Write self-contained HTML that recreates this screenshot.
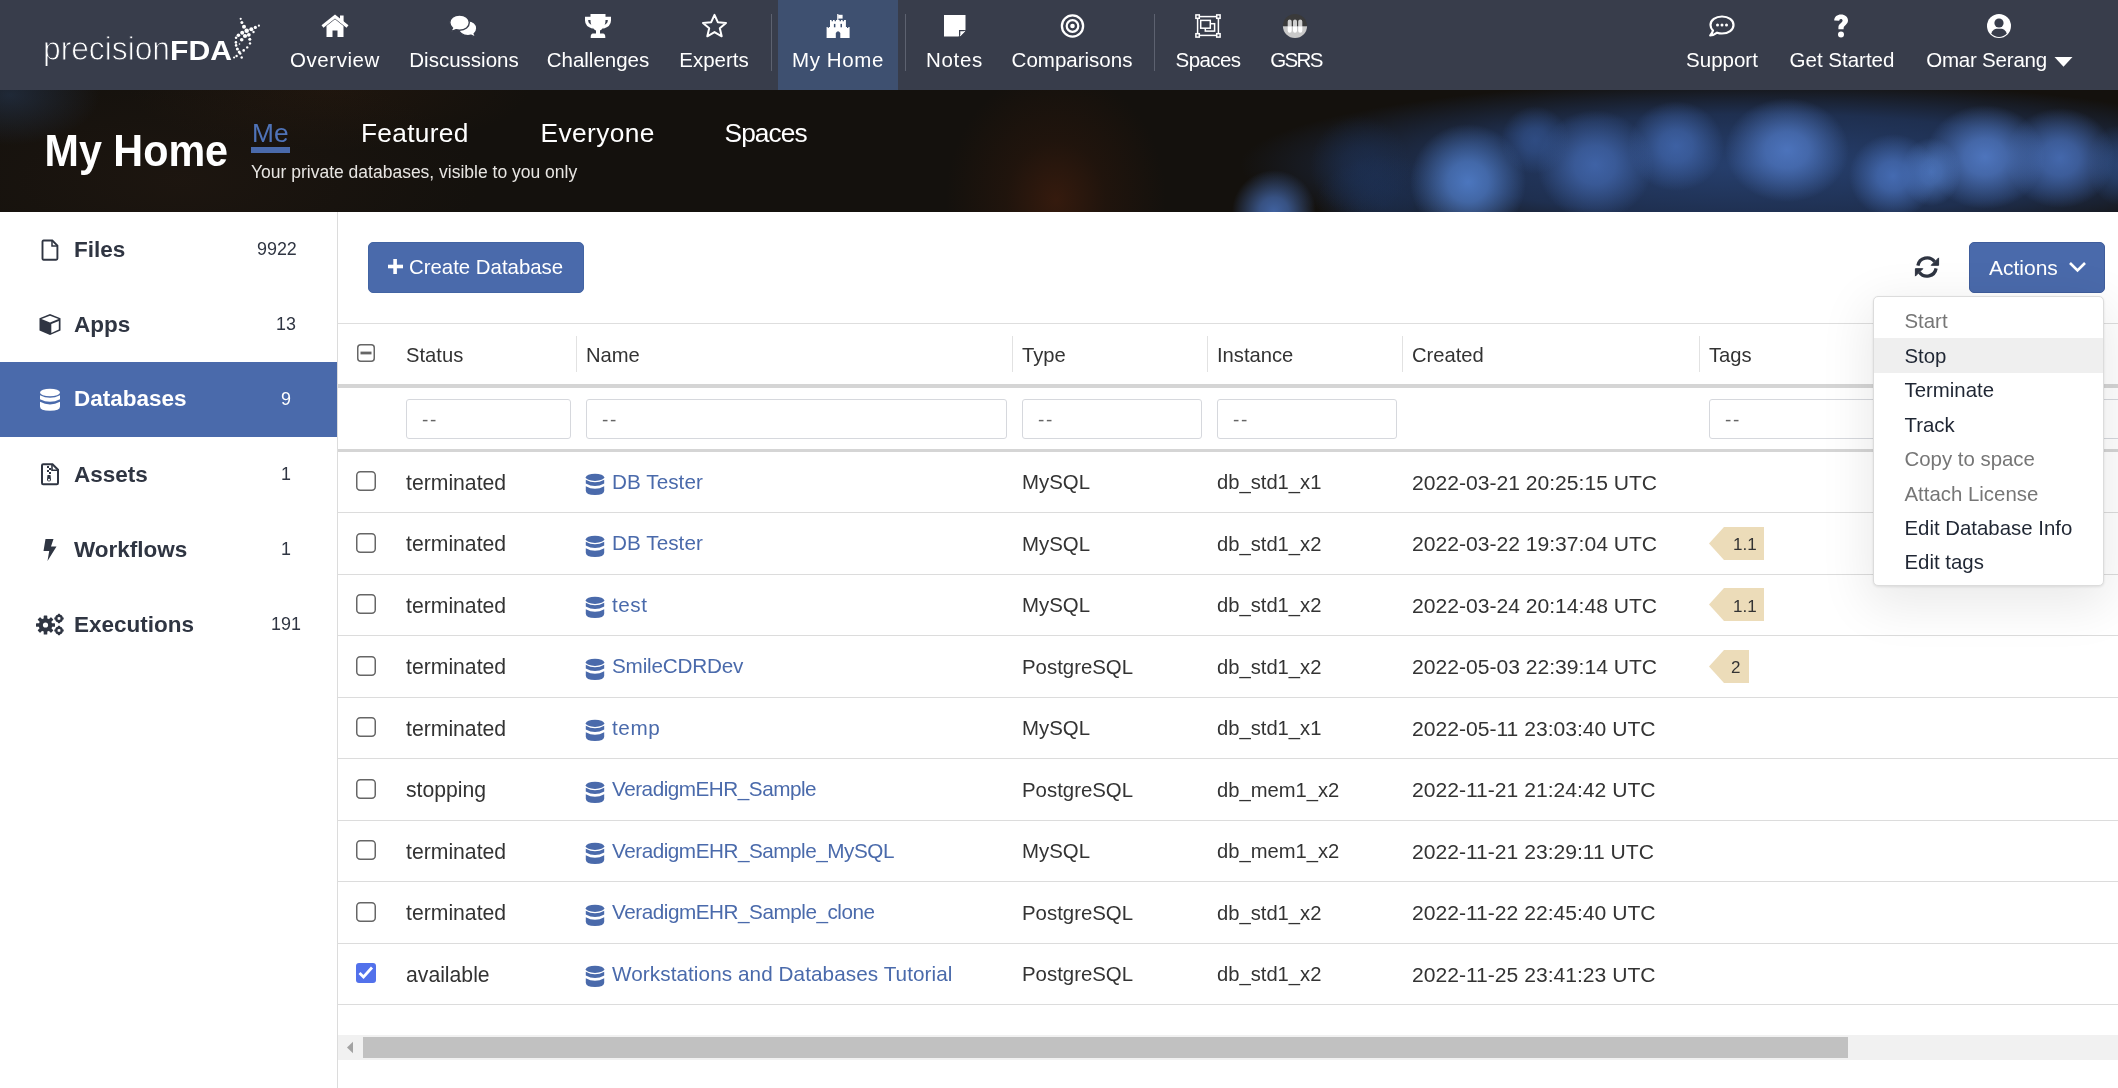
<!DOCTYPE html>
<html><head><meta charset="utf-8">
<style>
*{box-sizing:border-box}
html,body{margin:0;padding:0}
body{width:2118px;height:1088px;overflow:hidden;position:relative;will-change:transform;background:#fff;font-family:"Liberation Sans",sans-serif;color:#333}
.a{position:absolute}
.t{position:absolute;line-height:1;white-space:nowrap}
svg{position:absolute;display:block}
#nav{left:0;top:0;width:2118px;height:90px;background:#383d4b}
.ni{position:absolute;width:200px;text-align:center;color:#fff;font-size:20.5px;line-height:1;top:49.6px;white-space:nowrap}
.sep{position:absolute;top:14px;width:1px;height:57px;background:#5d6270}
#banner{left:0;top:90px;width:2118px;height:122px;overflow:hidden;background:radial-gradient(ellipse 58px 58px at 1468px 92px, rgba(78,122,196,0.95) 0, rgba(78,122,196,0.76) 35%, rgba(78,122,196,0) 100%),radial-gradient(ellipse 42px 42px at 1274px 122px, rgba(72,112,186,0.85) 0, rgba(72,112,186,0.68) 35%, rgba(72,112,186,0) 100%),radial-gradient(ellipse 50px 50px at 1360px 76px, rgba(30,55,100,0.45) 0, rgba(30,55,100,0.36) 35%, rgba(30,55,100,0) 100%),radial-gradient(ellipse 34px 34px at 1535px 50px, rgba(55,90,155,0.65) 0, rgba(55,90,155,0.52) 35%, rgba(55,90,155,0) 100%),radial-gradient(ellipse 58px 55px at 1595px 75px, rgba(68,106,178,0.85) 0, rgba(68,106,178,0.68) 35%, rgba(68,106,178,0) 100%),radial-gradient(ellipse 48px 45px at 1676px 56px, rgba(66,104,175,0.85) 0, rgba(66,104,175,0.68) 35%, rgba(66,104,175,0) 100%),radial-gradient(ellipse 62px 52px at 1787px 60px, rgba(78,118,192,0.95) 0, rgba(78,118,192,0.76) 35%, rgba(78,118,192,0) 100%),radial-gradient(ellipse 44px 42px at 1893px 86px, rgba(72,112,186,0.90) 0, rgba(72,112,186,0.72) 35%, rgba(72,112,186,0) 100%),radial-gradient(ellipse 30px 34px at 1931px 82px, rgba(82,125,200,0.80) 0, rgba(82,125,200,0.64) 35%, rgba(82,125,200,0) 100%),radial-gradient(ellipse 60px 52px at 1985px 67px, rgba(80,120,194,0.95) 0, rgba(80,120,194,0.76) 35%, rgba(80,120,194,0) 100%),radial-gradient(ellipse 55px 50px at 2060px 68px, rgba(72,110,182,0.90) 0, rgba(72,110,182,0.72) 35%, rgba(72,110,182,0) 100%),radial-gradient(ellipse 30px 40px at 2118px 75px, rgba(50,85,145,0.60) 0, rgba(50,85,145,0.48) 35%, rgba(50,85,145,0) 100%),radial-gradient(ellipse 70px 50px at 1385px 115px, rgba(30,55,100,0.55) 0, rgba(30,55,100,0.44) 35%, rgba(30,55,100,0) 100%),radial-gradient(ellipse 520px 85px at 1760px 75px, rgba(42,72,128,0.85) 0, rgba(35,60,108,0.7) 60%, rgba(20,35,60,0) 100%),radial-gradient(ellipse 110px 130px at 1056px 110px, rgba(80,34,14,0.55) 0, rgba(55,26,12,0.35) 45%, rgba(30,20,14,0) 100%),radial-gradient(ellipse 90px 50px at 10px 5px, rgba(40,60,90,0.55) 0, rgba(40,60,90,0) 100%),radial-gradient(ellipse 300px 120px at 180px 90px, rgba(45,30,20,0.35) 0, rgba(40,28,18,0) 100%),radial-gradient(ellipse 200px 60px at 330px 0px, rgba(50,30,15,0.35) 0, rgba(50,30,15,0) 100%),#14110d}
#side{left:0;top:212px;width:337px;height:876px;background:#fff}
#sideb{left:337px;top:212px;width:1px;height:876px;background:#dcdcdc}
.sl{position:absolute;left:74px;font-weight:bold;font-size:22.5px;line-height:1;color:#2f3542;white-space:nowrap}
.sc{position:absolute;width:60px;left:256px;text-align:center;font-size:17.9px;line-height:1;color:#2f3542}
</style></head>
<body>
<!-- NAV -->
<div id="nav" class="a">
  <div class="a" style="left:778px;top:0;width:120px;height:90px;background:#3e5070"></div>

  <!-- nav icons -->
  <svg style="left:321px;top:14px" width="28" height="24" viewBox="0 0 28 24">
    <path d="M1.5 12.5 L14 2.5 L26.5 12.5" fill="none" stroke="#fff" stroke-width="3.2" stroke-linejoin="miter"/>
    <rect x="19" y="1.5" width="3.6" height="7" fill="#fff"/>
    <path d="M5.5 12 L14 5.3 L22.5 12 V23 H16.5 V16.5 H11.5 V23 H5.5 Z" fill="#fff"/>
  </svg>
  <svg style="left:449px;top:14px" width="29" height="24" viewBox="0 0 29 24">
    <path d="M19 6.8 C24.3 6.8 27.8 10.3 27.8 14.3 C27.8 16.5 26.8 18.4 25.2 19.8 C25.6 21 26.5 22.2 27.6 23 C25.2 23 23.3 22.1 21.9 21.2 C21 21.5 20 21.7 19 21.7 C13.7 21.7 9.5 18.4 9.5 14.3 C9.5 10.3 13.7 6.8 19 6.8 Z" fill="#fff" stroke="#383d4b" stroke-width="1.4"/>
    <path d="M10.5 1 C16.2 1 20.3 4.4 20.3 8.6 C20.3 12.8 16.2 16.2 10.5 16.2 C9.3 16.2 8.2 16 7.2 15.7 C5.8 16.5 3.5 17.3 1 17.2 C2.1 16.4 3 15.3 3.5 14 C1.8 12.6 0.8 10.7 0.8 8.6 C0.8 4.4 4.9 1 10.5 1 Z" fill="#fff" stroke="#383d4b" stroke-width="1.4"/>
  </svg>
  <svg style="left:584px;top:13px" width="28" height="26" viewBox="0 0 28 26">
    <path d="M6.5 1 H21.5 V7 C21.5 13 18.5 16.5 16 17.5 V20.5 H19 Q21.3 20.5 21.3 24 V25 H6.7 V24 Q6.7 20.5 9 20.5 H12 V17.5 C9.5 16.5 6.5 13 6.5 7 Z" fill="#fff"/>
    <path d="M7 5.4 H2.6 V7.6 C2.6 11 5.5 13.2 9 14.2" fill="none" stroke="#fff" stroke-width="3.2"/>
    <path d="M21 5.4 H25.4 V7.6 C25.4 11 22.5 13.2 19 14.2" fill="none" stroke="#fff" stroke-width="3.2"/>
  </svg>
  <svg style="left:701px;top:13px" width="27" height="26" viewBox="0 0 27 26">
    <path d="M13.5 1.8 L16.8 9.2 L25 9.9 L18.8 15.3 L20.7 23.3 L13.5 19.1 L6.3 23.3 L8.2 15.3 L2 9.9 L10.2 9.2 Z" fill="none" stroke="#fff" stroke-width="2" stroke-linejoin="round"/>
  </svg>
  <svg style="left:826px;top:13px" width="25" height="26" viewBox="0 0 25 26">
    <rect x="11.2" y="1" width="1.2" height="6.5" fill="#fff"/>
    <path d="M12.2 1.8 H16.6 V5.6 H12.2 Z" fill="#fff"/>
    <path d="M0.6 13.9 H1.8 V15 H2.8 V13.9 H4 V7.1 H5.6 V8.3 H7 V7.1 H8.6 V8.3 H10 V7.1 H13.6 V8.3 H15 V7.1 H16.6 V8.3 H18 V7.1 H19.9 V13.9 H21 V15 H22.3 V13.9 H23.6 V25 H14.3 V20 Q12.05 16.5 9.8 20 V25 H0.6 Z" fill="#fff"/>
    <rect x="7.9" y="10.9" width="1.5" height="3.4" fill="#3e5070"/>
    <rect x="14.5" y="10.9" width="1.5" height="3.4" fill="#3e5070"/>
  </svg>
  <svg style="left:943px;top:14px" width="24" height="24" viewBox="0 0 24 24">
    <path d="M1 1 H22.5 V15.5 L15.5 22.5 H1 Z" fill="#fff"/>
    <path d="M16.8 22.5 V16.8 H22.5 Z" fill="#fff"/>
    <path d="M16 16 H22.5 L16 22.5 Z" fill="#383d4b"/>
    <path d="M17.3 17.3 H22.2 L17.3 22.2 Z" fill="#fff"/>
  </svg>
  <svg style="left:1060px;top:13px" width="25" height="26" viewBox="0 0 25 26">
    <circle cx="12.5" cy="13" r="10.6" fill="none" stroke="#fff" stroke-width="2.3"/>
    <circle cx="12.5" cy="13" r="5.8" fill="none" stroke="#fff" stroke-width="2.2"/>
    <circle cx="12.5" cy="13" r="2.3" fill="#fff"/>
  </svg>
  <svg style="left:1195px;top:14px" width="26" height="24" viewBox="0 0 26 24">
    <rect x="2.6" y="2.6" width="20.8" height="18.8" fill="none" stroke="#fff" stroke-width="1.5"/>
    <rect x="0.9" y="0.9" width="3.4" height="3.4" fill="#383d4b" stroke="#fff" stroke-width="1.5"/>
    <rect x="21.7" y="0.9" width="3.4" height="3.4" fill="#383d4b" stroke="#fff" stroke-width="1.5"/>
    <rect x="0.9" y="19.7" width="3.4" height="3.4" fill="#383d4b" stroke="#fff" stroke-width="1.5"/>
    <rect x="21.7" y="19.7" width="3.4" height="3.4" fill="#383d4b" stroke="#fff" stroke-width="1.5"/>
    <rect x="10.3" y="9.7" width="9.3" height="7.4" fill="none" stroke="#fff" stroke-width="1.5"/>
    <rect x="5.7" y="6.4" width="9.6" height="7.8" fill="#383d4b" stroke="#fff" stroke-width="1.5"/>
  </svg>
  <svg style="left:1282px;top:13px" width="26" height="26" viewBox="0 0 26 26">
    <defs><clipPath id="gc"><circle cx="13" cy="13" r="12.1"/></clipPath></defs>
    <g clip-path="url(#gc)">
      <rect x="0" y="0" width="26" height="13.3" fill="#3a3a3a"/>
      <rect x="0" y="13.3" width="26" height="13" fill="#c9c9c9"/>
      <path d="M5.7 13.3 V8.5 A2 2 0 0 1 9.7 8.5 V13.3 Z M11 13.3 V8.5 A2 2 0 0 1 15 8.5 V13.3 Z M16.2 13.3 V8.5 A2 2 0 0 1 20.3 8.5 V13.3 Z" fill="#cfcfcf"/>
      <path d="M5.7 13.3 H9.7 V17.8 A2 2 0 0 1 5.7 17.8 Z M11 13.3 H15 V17.8 A2 2 0 0 1 11 17.8 Z M16.2 13.3 H20.3 V17.8 A2 2 0 0 1 16.2 17.8 Z" fill="#fff"/>
    </g>
  </svg>
  <svg style="left:1709px;top:15px" width="26" height="22" viewBox="0 0 26 22">
    <path d="M13 1.5 C19.5 1.5 24.5 5.3 24.5 10 C24.5 14.7 19.5 18.5 13 18.5 C11.2 18.5 9.6 18.2 8.1 17.7 C6 19.3 3.5 20.5 1.2 20.5 C2.6 19 3.6 17.3 4 15.6 C2.4 14.1 1.5 12.1 1.5 10 C1.5 5.3 6.5 1.5 13 1.5 Z" fill="none" stroke="#fff" stroke-width="2.2" stroke-linejoin="round"/>
    <circle cx="8.5" cy="10" r="1.5" fill="#fff"/><circle cx="13" cy="10" r="1.5" fill="#fff"/><circle cx="17.5" cy="10" r="1.5" fill="#fff"/>
  </svg>
  <svg style="left:1831px;top:13px" width="20" height="26" viewBox="0 0 20 26">
    <path d="M3.2 7.5 C3.2 3.8 6.2 1.5 10 1.5 C14 1.5 17 4 17 7.5 C17 11.5 13 12 12.6 15.2 V16.2 H7.4 V14.8 C7.4 10.5 11.6 10 11.6 7.6 C11.6 6.5 10.9 5.9 9.9 5.9 C8.8 5.9 8.3 6.6 8.3 7.8 Z" fill="#fff"/>
    <circle cx="10" cy="21.5" r="3" fill="#fff"/>
  </svg>
  <svg style="left:1986px;top:13px" width="26" height="26" viewBox="0 0 26 26">
    <circle cx="13" cy="13" r="12" fill="#fff"/>
    <circle cx="13" cy="10" r="4.6" fill="#383d4b"/>
    <path d="M5.2 20.5 C6.5 17 9 15.8 10.5 15.8 H15.5 C17 15.8 19.5 17 20.8 20.5 C18.8 22.6 16 24 13 24 C10 24 7.2 22.6 5.2 20.5 Z" fill="#383d4b"/>
  </svg>
  <svg style="left:2054px;top:56px" width="19" height="12" viewBox="0 0 19 12">
    <path d="M0.5 1 H18.5 L9.5 10.8 Z" fill="#fff"/>
  </svg>
  <!-- logo -->
  <svg style="left:40px;top:14px" width="225" height="52" viewBox="0 0 225 52">
    <text x="3" y="46" fill="#fff" stroke="#383d4b" stroke-width="0.9" font-family="Liberation Sans" font-size="33" textLength="127" lengthAdjust="spacingAndGlyphs">precision</text>
    <text x="130" y="46" fill="#fff" font-family="Liberation Sans" font-size="28.5" font-weight="bold" textLength="62" lengthAdjust="spacingAndGlyphs">FDA</text>
    <g fill="#fff"><circle cx="200.7" cy="4.8" r="1.1"/><circle cx="201.9" cy="8.4" r="1.5"/><circle cx="204.0" cy="12.7" r="2.0"/><circle cx="206.7" cy="16.7" r="2.3"/><circle cx="205.0" cy="22.0" r="2.1"/><circle cx="201.7" cy="25.8" r="1.8"/><circle cx="195.9" cy="28.4" r="1.3"/><circle cx="196.1" cy="31.4" r="1.3"/><circle cx="197.4" cy="34.9" r="1.5"/><circle cx="199.2" cy="38.0" r="1.5"/><circle cx="201.7" cy="43.5" r="1.2"/><circle cx="218.9" cy="11.7" r="1.1"/><circle cx="215.3" cy="13.4" r="1.6"/><circle cx="211.3" cy="15.2" r="2.0"/><circle cx="208.8" cy="20.8" r="1.9"/><circle cx="202.2" cy="18.8" r="2.0"/><circle cx="198.4" cy="21.3" r="1.8"/><circle cx="196.1" cy="23.8" r="1.3"/><circle cx="209.8" cy="25.3" r="1.5"/><circle cx="210.0" cy="29.4" r="1.2"/><circle cx="207.2" cy="33.4" r="1.2"/><circle cx="203.7" cy="36.4" r="1.3"/><circle cx="200.2" cy="39.5" r="1.3"/><circle cx="196.6" cy="42.0" r="1.2"/><circle cx="194.1" cy="43.5" r="1.1"/><circle cx="213.5" cy="18.0" r="1.2"/><circle cx="199.5" cy="30.0" r="0.8"/></g>
  </svg>
  <div class="ni" style="left:235px;letter-spacing:0.55px">Overview</div>
  <div class="ni" style="left:364px">Discussions</div>
  <div class="ni" style="left:498px">Challenges</div>
  <div class="ni" style="left:614px">Experts</div>
  <div class="sep" style="left:771px"></div>
  <div class="ni" style="left:738px;letter-spacing:0.6px">My Home</div>
  <div class="sep" style="left:905px"></div>
  <div class="ni" style="left:854.5px;letter-spacing:0.7px">Notes</div>
  <div class="ni" style="left:972px">Comparisons</div>
  <div class="sep" style="left:1154px"></div>
  <div class="ni" style="left:1108px;letter-spacing:-0.6px">Spaces</div>
  <div class="ni" style="left:1196px;letter-spacing:-1.6px">GSRS</div>
  <div class="ni" style="left:1622px">Support</div>
  <div class="ni" style="left:1742px">Get Started</div>
  <div class="ni" style="width:200px;text-align:right;left:1847px;letter-spacing:-0.2px">Omar Serang</div>
</div>

<!-- BANNER -->
<div id="banner" class="a"></div>
<div class="t" style="left:44.5px;top:132px;font-size:41.3px;font-weight:bold;color:#fff;transform:scaleY(1.08);transform-origin:0 35px">My Home</div>
<div class="t" style="left:252px;top:119.7px;font-size:26.3px;color:#4f73b8">Me</div>
<div class="a" style="left:251px;top:147px;width:39px;height:6px;background:#4a6aab"></div>
<div class="t" style="left:361px;top:119.7px;font-size:26.3px;color:#fff;letter-spacing:0.3px">Featured</div>
<div class="t" style="left:540.5px;top:119.7px;font-size:26.3px;color:#fff;letter-spacing:0.4px">Everyone</div>
<div class="t" style="left:724.5px;top:119.7px;font-size:26.3px;color:#fff;letter-spacing:-0.9px">Spaces</div>
<div class="t" style="left:251px;top:163.8px;font-size:17.5px;color:#e8e6e3">Your private databases, visible to you only</div>

<!-- SIDEBAR -->
<div id="side" class="a"></div>
<div id="sideb" class="a"></div>
<div class="a" style="left:0;top:362px;width:337px;height:75px;background:#4a6aab"></div>
<div class="sl" style="top:238.5px">Files</div>
<div class="sl" style="top:313.6px">Apps</div>
<div class="sl" style="top:388.4px;color:#fff">Databases</div>
<div class="sl" style="top:463.5px">Assets</div>
<div class="sl" style="top:538.5px">Workflows</div>
<div class="sl" style="top:613.5px">Executions</div>
<div class="t" style="left:257px;top:240.9px;font-size:17.9px;color:#2f3542">9922</div>
<div class="sc" style="top:315.9px">13</div>
<div class="sc" style="top:390.9px;color:#fff">9</div>
<div class="sc" style="top:465.9px">1</div>
<div class="sc" style="top:540.9px">1</div>
<div class="sc" style="top:615.9px">191</div>


<!-- sidebar icons -->
<svg style="left:41px;top:239px" width="19" height="23" viewBox="0 0 19 23">
  <path d="M2.6 1.5 H11.3 L16.4 6.6 V19.5 Q16.4 20.7 15.2 20.7 H2.6 Q1.5 20.7 1.5 19.5 V2.7 Q1.5 1.5 2.6 1.5 Z" fill="none" stroke="#2f3542" stroke-width="1.9"/>
  <path d="M11 1.7 V7 H16.2" fill="none" stroke="#2f3542" stroke-width="1.5"/>
</svg>
<svg style="left:38px;top:313px" width="24" height="23" viewBox="0 0 24 23">
  <path d="M12 1 L22.5 5.2 V17.5 L12 22 L1.5 17.5 V5.2 Z" fill="#2f3542"/>
  <path d="M3.4 6.1 L12 9.6 L20.6 6.1 L12 2.7 Z" fill="#fff"/>
  <path d="M13.3 11 L20.8 7.9 V16.6 L13.3 19.9 Z" fill="#fff"/>
</svg>
<svg style="left:39px;top:388px" width="22" height="24" viewBox="0 0 22 24">
  <ellipse cx="11" cy="4.5" rx="10" ry="3.8" fill="#fff"/>
  <path d="M1 7.2 Q11 12.5 21 7.2 V11.2 Q11 16.5 1 11.2 Z" fill="#fff"/>
  <path d="M1 13.8 Q11 19 21 13.8 V18.5 Q21 22.8 11 22.8 Q1 22.8 1 18.5 Z" fill="#fff"/>
</svg>
<svg style="left:41px;top:463px" width="19" height="23" viewBox="0 0 19 23">
  <path d="M2.2 1.2 H11.5 L17 6.7 V20 Q17 21.3 15.7 21.3 H2.2 Q1 21.3 1 20 V2.5 Q1 1.2 2.2 1.2 Z" fill="none" stroke="#2f3542" stroke-width="2"/>
  <path d="M11 1.5 V7.2 H16.8" fill="none" stroke="#2f3542" stroke-width="1.6"/>
  <path d="M6 3 H8 V5 H6 Z M8 5 H10 V7 H8 Z M6 7 H8 V9 H6 Z M8 9 H10 V11 H8 Z" fill="#2f3542"/>
  <path d="M6.5 12 H9.5 L10 16.5 A2 2 0 1 1 6 16.5 Z" fill="#2f3542"/>
  <circle cx="8" cy="16.7" r="1" fill="#fff"/>
</svg>
<svg style="left:41px;top:538px" width="18" height="24" viewBox="0 0 18 24">
  <path d="M4.5 1 H12.5 L10 8.5 H15.5 L6.5 23 L8.2 13 H2.5 Z" fill="#2f3542"/>
</svg>
<svg style="left:35px;top:613px" width="30" height="23" viewBox="0 0 30 23">
  <g fill="#2f3542">
    <circle cx="10.5" cy="12" r="6.8"/>
    <rect x="8.7" y="2.5" width="3.6" height="19" rx="0.6"/>
    <rect x="1" y="10.2" width="19" height="3.6" rx="0.6"/>
    <rect x="8.7" y="2.5" width="3.6" height="19" rx="0.6" transform="rotate(45 10.5 12)"/>
    <rect x="8.7" y="2.5" width="3.6" height="19" rx="0.6" transform="rotate(-45 10.5 12)"/>
  </g>
  <circle cx="10.5" cy="12" r="2.6" fill="#fff"/>
  <g fill="none" stroke="#2f3542" stroke-width="2.2">
    <circle cx="24" cy="5.5" r="2.8"/>
    <circle cx="24" cy="17.5" r="2.8"/>
  </g>
  <g fill="#2f3542">
    <rect x="23" y="0.8" width="2" height="9.4"/><rect x="19.3" y="4.5" width="9.4" height="2"/>
    <rect x="23" y="12.8" width="2" height="9.4"/><rect x="19.3" y="16.5" width="9.4" height="2"/>
  </g>
  <circle cx="24" cy="5.5" r="1.4" fill="#fff"/><circle cx="24" cy="17.5" r="1.4" fill="#fff"/>
</svg>

<!-- CONTENT -->

<!-- toolbar -->
<div class="a" style="left:368px;top:242px;width:216px;height:51px;background:#4a6aab;border-radius:5px;border:1px solid #4264a3"></div>
<svg style="left:387px;top:258px" width="17" height="17" viewBox="0 0 17 17"><rect x="6.3" y="1" width="3.6" height="15" fill="#fff"/><rect x="1" y="6.7" width="15" height="3.6" fill="#fff"/></svg>
<div class="t" style="left:409px;top:257.4px;font-size:20.4px;color:#fff">Create Database</div>
<svg style="left:1914px;top:254px" width="26" height="26" viewBox="0 0 26 26">
  <path d="M3.9 11.6 A9.3 9.3 0 0 1 20.6 7.7" fill="none" stroke="#2f3542" stroke-width="3.3"/>
  <path d="M17.2 11.3 L24.6 11.3 L24.6 3.9 Z" fill="#2f3542" stroke="#2f3542" stroke-width="1" stroke-linejoin="round"/>
  <path d="M22.1 14.4 A9.3 9.3 0 0 1 5.4 18.3" fill="none" stroke="#2f3542" stroke-width="3.3"/>
  <path d="M8.8 14.7 L1.4 14.7 L1.4 22.1 Z" fill="#2f3542" stroke="#2f3542" stroke-width="1" stroke-linejoin="round"/>
</svg>
<div class="a" style="left:1969px;top:242px;width:136px;height:51px;background:#4a6aab;border-radius:5px;border:1px solid #3f5d9c"></div>
<div class="t" style="left:1989px;top:257.2px;font-size:21px;color:#fff">Actions</div>
<svg style="left:2068px;top:260px" width="19" height="14" viewBox="0 0 19 14"><path d="M2 3 L9.5 10.5 L17 3" fill="none" stroke="#fff" stroke-width="2.6"/></svg>

<!-- table -->
<div class="a" style="left:338px;top:323px;width:1780px;height:1px;background:#dedede"></div>
<div class="a" style="left:338px;top:384px;width:1780px;height:4px;background:#d5d5d5"></div>
<div class="a" style="left:338px;top:449px;width:1780px;height:3px;background:#d5d5d5"></div>
<div class="a" style="left:576px;top:336px;width:1px;height:36px;background:#e2e2e2"></div>
<div class="a" style="left:1012px;top:336px;width:1px;height:36px;background:#e2e2e2"></div>
<div class="a" style="left:1207px;top:336px;width:1px;height:36px;background:#e2e2e2"></div>
<div class="a" style="left:1402px;top:336px;width:1px;height:36px;background:#e2e2e2"></div>
<div class="a" style="left:1699px;top:336px;width:1px;height:36px;background:#e2e2e2"></div>
<svg style="left:356px;top:343px" width="20" height="20" viewBox="0 0 20 20"><rect x="1.75" y="1.75" width="16.5" height="16.5" rx="3" fill="#fff" stroke="#666" stroke-width="1.5"/><rect x="4.5" y="8.6" width="11" height="2.8" fill="#666"/></svg>

<div class="t" style="left:406px;top:344.5px;font-size:20.2px;color:#333">Status</div>
<div class="t" style="left:586px;top:344.5px;font-size:20.2px;color:#333">Name</div>
<div class="t" style="left:1022px;top:344.5px;font-size:20.2px;color:#333">Type</div>
<div class="t" style="left:1217px;top:344.5px;font-size:20.2px;color:#333">Instance</div>
<div class="t" style="left:1412px;top:344.5px;font-size:20.2px;color:#333">Created</div>
<div class="t" style="left:1709px;top:344.5px;font-size:20.2px;color:#333">Tags</div>
<div class="a" style="left:406px;top:399px;width:165px;height:40px;border:1px solid #d6d8dd;border-radius:3px;background:#fff"></div>
<div class="t" style="left:422px;top:410px;font-size:19px;color:#666;letter-spacing:1.6px">--</div>
<div class="a" style="left:586px;top:399px;width:421px;height:40px;border:1px solid #d6d8dd;border-radius:3px;background:#fff"></div>
<div class="t" style="left:602px;top:410px;font-size:19px;color:#666;letter-spacing:1.6px">--</div>
<div class="a" style="left:1022px;top:399px;width:180px;height:40px;border:1px solid #d6d8dd;border-radius:3px;background:#fff"></div>
<div class="t" style="left:1038px;top:410px;font-size:19px;color:#666;letter-spacing:1.6px">--</div>
<div class="a" style="left:1217px;top:399px;width:180px;height:40px;border:1px solid #d6d8dd;border-radius:3px;background:#fff"></div>
<div class="t" style="left:1233px;top:410px;font-size:19px;color:#666;letter-spacing:1.6px">--</div>
<div class="a" style="left:1709px;top:399px;width:500px;height:40px;border:1px solid #d6d8dd;border-radius:3px;background:#fff"></div>
<div class="t" style="left:1725px;top:410px;font-size:19px;color:#666;letter-spacing:1.6px">--</div>
<div class="a" style="left:338px;top:512.0px;width:1780px;height:1px;background:#dcdcdc"></div>
<svg style="left:355px;top:470.0px" width="22" height="22" viewBox="0 0 22 22"><rect x="1.75" y="1.75" width="18.5" height="18.5" rx="3.5" fill="#fff" stroke="#666" stroke-width="1.5"/></svg>
<div class="t" style="left:406px;top:471.5px;font-size:21.2px;color:#333">terminated</div>
<svg style="left:585px;top:473.0px" width="20" height="23" viewBox="0 0 20 23"><ellipse cx="10" cy="4.3" rx="9.2" ry="3.6" fill="#4a6aab"/><path d="M0.8 6.8 Q10 11.8 19.2 6.8 V10.6 Q10 15.6 0.8 10.6 Z" fill="#4a6aab"/><path d="M0.8 13.2 Q10 18.2 19.2 13.2 V17.8 Q19.2 22 10 22 Q0.8 22 0.8 17.8 Z" fill="#4a6aab"/></svg>
<div class="t" style="left:612px;top:471.9px;font-size:20.7px;color:#4a6aab;letter-spacing:0.05px">DB Tester</div>
<div class="t" style="left:1022px;top:472.2px;font-size:20.4px;color:#333">MySQL</div>
<div class="t" style="left:1217px;top:472.3px;font-size:20.2px;color:#333">db_std1_x1</div>
<div class="t" style="left:1412px;top:471.6px;font-size:21.1px;color:#333">2022-03-21 20:25:15 UTC</div>
<div class="a" style="left:338px;top:573.5px;width:1780px;height:1px;background:#dcdcdc"></div>
<svg style="left:355px;top:531.5px" width="22" height="22" viewBox="0 0 22 22"><rect x="1.75" y="1.75" width="18.5" height="18.5" rx="3.5" fill="#fff" stroke="#666" stroke-width="1.5"/></svg>
<div class="t" style="left:406px;top:533.0px;font-size:21.2px;color:#333">terminated</div>
<svg style="left:585px;top:534.5px" width="20" height="23" viewBox="0 0 20 23"><ellipse cx="10" cy="4.3" rx="9.2" ry="3.6" fill="#4a6aab"/><path d="M0.8 6.8 Q10 11.8 19.2 6.8 V10.6 Q10 15.6 0.8 10.6 Z" fill="#4a6aab"/><path d="M0.8 13.2 Q10 18.2 19.2 13.2 V17.8 Q19.2 22 10 22 Q0.8 22 0.8 17.8 Z" fill="#4a6aab"/></svg>
<div class="t" style="left:612px;top:533.4px;font-size:20.7px;color:#4a6aab;letter-spacing:0.05px">DB Tester</div>
<div class="t" style="left:1022px;top:533.7px;font-size:20.4px;color:#333">MySQL</div>
<div class="t" style="left:1217px;top:533.8px;font-size:20.2px;color:#333">db_std1_x2</div>
<div class="t" style="left:1412px;top:533.1px;font-size:21.1px;color:#333">2022-03-22 19:37:04 UTC</div>
<svg style="left:1709px;top:526.5px" width="55" height="33" viewBox="0 0 55 33"><path d="M0 16.5 L15 0 H55 V33 H15 Z" fill="#ecdcb9"/></svg>
<div class="t" style="left:1733px;top:536.0px;font-size:17px;color:#333">1.1</div>
<div class="a" style="left:338px;top:635.0px;width:1780px;height:1px;background:#dcdcdc"></div>
<svg style="left:355px;top:593.0px" width="22" height="22" viewBox="0 0 22 22"><rect x="1.75" y="1.75" width="18.5" height="18.5" rx="3.5" fill="#fff" stroke="#666" stroke-width="1.5"/></svg>
<div class="t" style="left:406px;top:594.5px;font-size:21.2px;color:#333">terminated</div>
<svg style="left:585px;top:596.0px" width="20" height="23" viewBox="0 0 20 23"><ellipse cx="10" cy="4.3" rx="9.2" ry="3.6" fill="#4a6aab"/><path d="M0.8 6.8 Q10 11.8 19.2 6.8 V10.6 Q10 15.6 0.8 10.6 Z" fill="#4a6aab"/><path d="M0.8 13.2 Q10 18.2 19.2 13.2 V17.8 Q19.2 22 10 22 Q0.8 22 0.8 17.8 Z" fill="#4a6aab"/></svg>
<div class="t" style="left:612px;top:594.9px;font-size:20.7px;color:#4a6aab;letter-spacing:0.52px">test</div>
<div class="t" style="left:1022px;top:595.2px;font-size:20.4px;color:#333">MySQL</div>
<div class="t" style="left:1217px;top:595.3px;font-size:20.2px;color:#333">db_std1_x2</div>
<div class="t" style="left:1412px;top:594.6px;font-size:21.1px;color:#333">2022-03-24 20:14:48 UTC</div>
<svg style="left:1709px;top:588.0px" width="55" height="33" viewBox="0 0 55 33"><path d="M0 16.5 L15 0 H55 V33 H15 Z" fill="#ecdcb9"/></svg>
<div class="t" style="left:1733px;top:597.5px;font-size:17px;color:#333">1.1</div>
<div class="a" style="left:338px;top:696.5px;width:1780px;height:1px;background:#dcdcdc"></div>
<svg style="left:355px;top:654.5px" width="22" height="22" viewBox="0 0 22 22"><rect x="1.75" y="1.75" width="18.5" height="18.5" rx="3.5" fill="#fff" stroke="#666" stroke-width="1.5"/></svg>
<div class="t" style="left:406px;top:656.0px;font-size:21.2px;color:#333">terminated</div>
<svg style="left:585px;top:657.5px" width="20" height="23" viewBox="0 0 20 23"><ellipse cx="10" cy="4.3" rx="9.2" ry="3.6" fill="#4a6aab"/><path d="M0.8 6.8 Q10 11.8 19.2 6.8 V10.6 Q10 15.6 0.8 10.6 Z" fill="#4a6aab"/><path d="M0.8 13.2 Q10 18.2 19.2 13.2 V17.8 Q19.2 22 10 22 Q0.8 22 0.8 17.8 Z" fill="#4a6aab"/></svg>
<div class="t" style="left:612px;top:656.4px;font-size:20.7px;color:#4a6aab;letter-spacing:-0.20px">SmileCDRDev</div>
<div class="t" style="left:1022px;top:656.7px;font-size:20.4px;color:#333">PostgreSQL</div>
<div class="t" style="left:1217px;top:656.8px;font-size:20.2px;color:#333">db_std1_x2</div>
<div class="t" style="left:1412px;top:656.1px;font-size:21.1px;color:#333">2022-05-03 22:39:14 UTC</div>
<svg style="left:1709px;top:649.5px" width="40" height="33" viewBox="0 0 40 33"><path d="M0 16.5 L15 0 H40 V33 H15 Z" fill="#ecdcb9"/></svg>
<div class="t" style="left:1731px;top:659.0px;font-size:17px;color:#333">2</div>
<div class="a" style="left:338px;top:758.0px;width:1780px;height:1px;background:#dcdcdc"></div>
<svg style="left:355px;top:716.0px" width="22" height="22" viewBox="0 0 22 22"><rect x="1.75" y="1.75" width="18.5" height="18.5" rx="3.5" fill="#fff" stroke="#666" stroke-width="1.5"/></svg>
<div class="t" style="left:406px;top:717.5px;font-size:21.2px;color:#333">terminated</div>
<svg style="left:585px;top:719.0px" width="20" height="23" viewBox="0 0 20 23"><ellipse cx="10" cy="4.3" rx="9.2" ry="3.6" fill="#4a6aab"/><path d="M0.8 6.8 Q10 11.8 19.2 6.8 V10.6 Q10 15.6 0.8 10.6 Z" fill="#4a6aab"/><path d="M0.8 13.2 Q10 18.2 19.2 13.2 V17.8 Q19.2 22 10 22 Q0.8 22 0.8 17.8 Z" fill="#4a6aab"/></svg>
<div class="t" style="left:612px;top:717.9px;font-size:20.7px;color:#4a6aab;letter-spacing:0.61px">temp</div>
<div class="t" style="left:1022px;top:718.2px;font-size:20.4px;color:#333">MySQL</div>
<div class="t" style="left:1217px;top:718.3px;font-size:20.2px;color:#333">db_std1_x1</div>
<div class="t" style="left:1412px;top:717.6px;font-size:21.1px;color:#333">2022-05-11 23:03:40 UTC</div>
<div class="a" style="left:338px;top:819.5px;width:1780px;height:1px;background:#dcdcdc"></div>
<svg style="left:355px;top:777.5px" width="22" height="22" viewBox="0 0 22 22"><rect x="1.75" y="1.75" width="18.5" height="18.5" rx="3.5" fill="#fff" stroke="#666" stroke-width="1.5"/></svg>
<div class="t" style="left:406px;top:779.0px;font-size:21.2px;color:#333">stopping</div>
<svg style="left:585px;top:780.5px" width="20" height="23" viewBox="0 0 20 23"><ellipse cx="10" cy="4.3" rx="9.2" ry="3.6" fill="#4a6aab"/><path d="M0.8 6.8 Q10 11.8 19.2 6.8 V10.6 Q10 15.6 0.8 10.6 Z" fill="#4a6aab"/><path d="M0.8 13.2 Q10 18.2 19.2 13.2 V17.8 Q19.2 22 10 22 Q0.8 22 0.8 17.8 Z" fill="#4a6aab"/></svg>
<div class="t" style="left:612px;top:779.4px;font-size:20.7px;color:#4a6aab;letter-spacing:-0.48px">VeradigmEHR_Sample</div>
<div class="t" style="left:1022px;top:779.7px;font-size:20.4px;color:#333">PostgreSQL</div>
<div class="t" style="left:1217px;top:779.8px;font-size:20.2px;color:#333">db_mem1_x2</div>
<div class="t" style="left:1412px;top:779.1px;font-size:21.1px;color:#333">2022-11-21 21:24:42 UTC</div>
<div class="a" style="left:338px;top:881.0px;width:1780px;height:1px;background:#dcdcdc"></div>
<svg style="left:355px;top:839.0px" width="22" height="22" viewBox="0 0 22 22"><rect x="1.75" y="1.75" width="18.5" height="18.5" rx="3.5" fill="#fff" stroke="#666" stroke-width="1.5"/></svg>
<div class="t" style="left:406px;top:840.5px;font-size:21.2px;color:#333">terminated</div>
<svg style="left:585px;top:842.0px" width="20" height="23" viewBox="0 0 20 23"><ellipse cx="10" cy="4.3" rx="9.2" ry="3.6" fill="#4a6aab"/><path d="M0.8 6.8 Q10 11.8 19.2 6.8 V10.6 Q10 15.6 0.8 10.6 Z" fill="#4a6aab"/><path d="M0.8 13.2 Q10 18.2 19.2 13.2 V17.8 Q19.2 22 10 22 Q0.8 22 0.8 17.8 Z" fill="#4a6aab"/></svg>
<div class="t" style="left:612px;top:840.9px;font-size:20.7px;color:#4a6aab;letter-spacing:-0.47px">VeradigmEHR_Sample_MySQL</div>
<div class="t" style="left:1022px;top:841.2px;font-size:20.4px;color:#333">MySQL</div>
<div class="t" style="left:1217px;top:841.3px;font-size:20.2px;color:#333">db_mem1_x2</div>
<div class="t" style="left:1412px;top:840.6px;font-size:21.1px;color:#333">2022-11-21 23:29:11 UTC</div>
<div class="a" style="left:338px;top:942.5px;width:1780px;height:1px;background:#dcdcdc"></div>
<svg style="left:355px;top:900.5px" width="22" height="22" viewBox="0 0 22 22"><rect x="1.75" y="1.75" width="18.5" height="18.5" rx="3.5" fill="#fff" stroke="#666" stroke-width="1.5"/></svg>
<div class="t" style="left:406px;top:902.0px;font-size:21.2px;color:#333">terminated</div>
<svg style="left:585px;top:903.5px" width="20" height="23" viewBox="0 0 20 23"><ellipse cx="10" cy="4.3" rx="9.2" ry="3.6" fill="#4a6aab"/><path d="M0.8 6.8 Q10 11.8 19.2 6.8 V10.6 Q10 15.6 0.8 10.6 Z" fill="#4a6aab"/><path d="M0.8 13.2 Q10 18.2 19.2 13.2 V17.8 Q19.2 22 10 22 Q0.8 22 0.8 17.8 Z" fill="#4a6aab"/></svg>
<div class="t" style="left:612px;top:902.4px;font-size:20.7px;color:#4a6aab;letter-spacing:-0.46px">VeradigmEHR_Sample_clone</div>
<div class="t" style="left:1022px;top:902.7px;font-size:20.4px;color:#333">PostgreSQL</div>
<div class="t" style="left:1217px;top:902.8px;font-size:20.2px;color:#333">db_std1_x2</div>
<div class="t" style="left:1412px;top:902.1px;font-size:21.1px;color:#333">2022-11-22 22:45:40 UTC</div>
<div class="a" style="left:338px;top:1004.0px;width:1780px;height:1px;background:#dcdcdc"></div>
<svg style="left:355px;top:962.0px" width="22" height="22" viewBox="0 0 22 22"><rect x="1" y="1" width="20" height="20" rx="3" fill="#5271eb"/><path d="M4.5 11 L8.5 15 L17 5.5" fill="none" stroke="#fff" stroke-width="2.8"/></svg>
<div class="t" style="left:406px;top:963.5px;font-size:21.2px;color:#333">available</div>
<svg style="left:585px;top:965.0px" width="20" height="23" viewBox="0 0 20 23"><ellipse cx="10" cy="4.3" rx="9.2" ry="3.6" fill="#4a6aab"/><path d="M0.8 6.8 Q10 11.8 19.2 6.8 V10.6 Q10 15.6 0.8 10.6 Z" fill="#4a6aab"/><path d="M0.8 13.2 Q10 18.2 19.2 13.2 V17.8 Q19.2 22 10 22 Q0.8 22 0.8 17.8 Z" fill="#4a6aab"/></svg>
<div class="t" style="left:612px;top:963.9px;font-size:20.7px;color:#4a6aab;letter-spacing:0.08px">Workstations and Databases Tutorial</div>
<div class="t" style="left:1022px;top:964.2px;font-size:20.4px;color:#333">PostgreSQL</div>
<div class="t" style="left:1217px;top:964.3px;font-size:20.2px;color:#333">db_std1_x2</div>
<div class="t" style="left:1412px;top:963.6px;font-size:21.1px;color:#333">2022-11-25 23:41:23 UTC</div>

<!-- scrollbar -->
<div class="a" style="left:338px;top:1035px;width:1780px;height:25px;background:#f1f1f1"></div>
<div class="a" style="left:363px;top:1037px;width:1485px;height:21px;background:#c1c1c1"></div>
<svg style="left:345px;top:1040px" width="10" height="15" viewBox="0 0 10 15"><path d="M8 1.8 V13.2 L2 7.5 Z" fill="#a3a3a3"/></svg>

<!-- dropdown -->
<div class="a" style="left:1873px;top:296px;width:231px;height:290px;background:#fff;border:1px solid #dcdcdc;border-radius:5px;box-shadow:0 1px 3px rgba(0,0,0,0.10),0 14px 50px 6px rgba(0,0,0,0.085)"></div>
<div class="a" style="left:1874px;top:338px;width:229px;height:35px;background:#efefef"></div>
<div class="t" style="left:1904.5px;top:311.4px;font-size:20.4px;color:#767676">Start</div>
<div class="t" style="left:1904.5px;top:345.8px;font-size:20.4px;color:#1f2633">Stop</div>
<div class="t" style="left:1904.5px;top:380.3px;font-size:20.4px;color:#1f2633">Terminate</div>
<div class="t" style="left:1904.5px;top:414.7px;font-size:20.4px;color:#1f2633">Track</div>
<div class="t" style="left:1904.5px;top:449.1px;font-size:20.4px;color:#767676">Copy to space</div>
<div class="t" style="left:1904.5px;top:483.6px;font-size:20.4px;color:#767676">Attach License</div>
<div class="t" style="left:1904.5px;top:518.0px;font-size:20.4px;color:#1f2633">Edit Database Info</div>
<div class="t" style="left:1904.5px;top:552.4px;font-size:20.4px;color:#1f2633">Edit tags</div>
</body></html>
